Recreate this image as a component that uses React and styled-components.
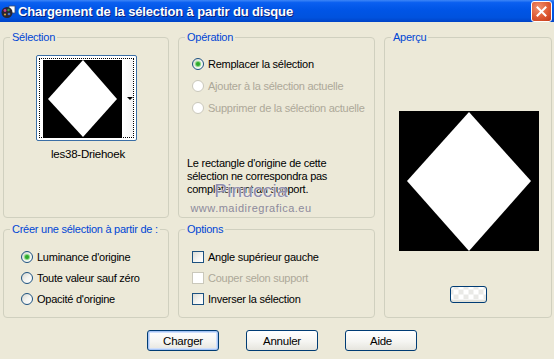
import React from 'react';
import styled, { createGlobalStyle } from 'styled-components';

const GlobalStyle = createGlobalStyle`
  html, body {
    margin: 0;
    padding: 0;
    background: #ece9d8;
  }
  body {
    font-family: "Liberation Sans", Arial, sans-serif;
    font-size: 11px;
    letter-spacing: -0.25px;
    color: #000;
  }
`;

const Window = styled.div`
  position: relative;
  width: 554px;
  height: 359px;
  background: #ece9d8;
  overflow: hidden;
`;

const TitleBar = styled.div`
  height: 22px;
  display: flex;
  align-items: center;
  padding: 0 2px 0 1px;
  background: linear-gradient(
    180deg,
    #3d86f7 0%,
    #0a5ff0 12%,
    #0055e6 45%,
    #0052de 80%,
    #0043c6 100%
  );
`;

const TitleText = styled.div`
  flex: 1;
  margin-left: 2px;
  color: #fff;
  font-weight: bold;
  font-size: 13px;
  letter-spacing: -0.15px;
  text-shadow: 1px 1px 0 #0a1e7a;
`;

const CloseButton = styled.div`
  width: 19px;
  height: 19px;
  border: 1px solid #fff;
  border-radius: 3px;
  display: flex;
  align-items: center;
  justify-content: center;
  background: radial-gradient(circle at 35% 30%, #f0916f 0%, #de5a33 55%, #c2391a 100%);
`;

const Body = styled.div`
  display: grid;
  grid-template-columns: 166px 197px 168px;
  grid-template-rows: 187px 95px;
  column-gap: 9px;
  row-gap: 5px;
  padding: 9px 0 0 3px;
`;

const Group = styled.fieldset`
  margin: 0;
  padding: 0;
  min-width: 0;
  border: 1px solid #d0d0bf;
  border-radius: 4px;
  grid-column: ${p => p.$col || 'auto'};
  grid-row: ${p => p.$rows || 'auto'};
  display: flex;
  flex-direction: column;
`;

const Legend = styled.legend`
  margin-left: 6px;
  padding: 0 2px;
  line-height: 13px;
  color: #0046d5;
  white-space: nowrap;
`;

const Rows = styled.div`
  display: flex;
  flex-direction: column;
  padding: ${p => p.$top}px 0 0 ${p => p.$left}px;
`;

const Row = styled.label`
  height: ${p => p.$h || 22}px;
  display: flex;
  align-items: center;
  gap: 4px;
  white-space: nowrap;
  color: ${p => (p.$disabled ? '#aca899' : '#000')};
`;

const Radio = styled.span`
  flex: none;
  box-sizing: border-box;
  width: 12px;
  height: 12px;
  border-radius: 50%;
  border: 1px solid ${p => (p.$disabled ? '#cac8bb' : '#1c5180')};
  background: ${p =>
    p.$disabled ? '#fff' : 'linear-gradient(135deg, #d6d6ce 0%, #f4f4f0 50%, #fff 100%)'};
  display: flex;
  align-items: center;
  justify-content: center;

  &::after {
    content: '';
    display: ${p => (p.$checked ? 'block' : 'none')};
    width: 4px;
    height: 4px;
    border-radius: 50%;
    background: #2fa82c;
    box-shadow: 0 0 1px 1px #7bd478;
  }
`;

const Check = styled.span`
  flex: none;
  box-sizing: border-box;
  width: 12px;
  height: 12px;
  border: 1px solid ${p => (p.$disabled ? '#cac8bb' : '#1c5180')};
  background: ${p =>
    p.$disabled ? '#fff' : 'linear-gradient(135deg, #dcdcd5 0%, #f6f6f3 60%, #fff 100%)'};
`;

const SelectionBody = styled.div`
  display: flex;
  flex-direction: column;
  align-items: center;
  padding: 11px 0 0 1px;
`;

const Thumb = styled.div`
  box-sizing: border-box;
  width: 101px;
  height: 86px;
  padding: 2px;
  border: 1px solid #3a6ea5;
  border-radius: 2px;
  background: #fff;
`;

const ThumbFocus = styled.div`
  box-sizing: border-box;
  height: 100%;
  display: flex;
  padding: 1px 0 0 3px;
  border: 1px dotted #000;
  background: #fff;
`;

const DropStrip = styled.div`
  flex: 1;
  display: flex;
  align-items: center;
  justify-content: flex-end;
  background: linear-gradient(90deg, #fff 0%, #f3f3f3 100%);
`;

const Arrow = styled.span`
  width: 0;
  height: 0;
  border-left: 3px solid transparent;
  border-right: 3px solid transparent;
  border-top: 3px solid #000;
`;

const ThumbLabel = styled.div`
  margin-top: 7px;
  font-size: 11.5px;
  padding-left: 3px;
`;

const Note = styled.p`
  margin: 38px 0 0 8px;
  line-height: 13px;
  white-space: nowrap;
`;

const PreviewBody = styled.div`
  display: flex;
  flex-direction: column;
  align-items: center;
  padding: 67px 0 0 1px;
`;

const PreviewButton = styled.div`
  margin-top: 35px;
  width: 37px;
  height: 17px;
  box-sizing: border-box;
  border: 1px solid #003c74;
  border-radius: 3px;
  background:
    repeating-conic-gradient(#e9e9e6 0 25%, #fff 0 50%) 50% 50% / 10px 10px;
  box-shadow: inset 0 -2px 0 #e3e3db;
`;

const ButtonBar = styled.div`
  display: flex;
  gap: 27px;
  padding: 12px 0 0 147px;
`;

const Button = styled.div`
  box-sizing: border-box;
  width: 72px;
  height: 21px;
  display: flex;
  align-items: center;
  justify-content: center;
  border: 1px solid #003c74;
  border-radius: 3px;
  font-size: 11.5px;
  background: linear-gradient(180deg, #fff 0%, #f5f5f2 55%, #e6e5de 100%);
  box-shadow: ${p => (p.$default ? 'inset 0 0 0 1px #a6c4f5, inset 0 0 0 2px #cfdffb' : 'none')};
`;

const Watermark = styled.div`
  position: absolute;
  left: 190px;
  top: 181px;
  display: flex;
  flex-direction: column;
  align-items: center;
  width: 122px;
  pointer-events: none;
`;

const WatermarkName = styled.div`
  font-size: 19px;
  line-height: 20px;
  color: #8e8caa;
  letter-spacing: 0.2px;
  text-shadow: 0 0 1px #fff, 0 0 2px #f4f2ee;
`;

const WatermarkUrl = styled.div`
  margin-top: 1px;
  font-size: 11px;
  color: #8c8a9c;
  letter-spacing: 0.5px;
`;

const Diamond = ({ w, h, pts }) => (
  <svg width={w} height={h} viewBox={`0 0 ${w} ${h}`} style={{ display: 'block' }}>
    <rect width={w} height={h} fill="#000" />
    <polygon points={pts} fill="#fff" />
  </svg>
);

const AppIcon = () => (
  <svg width="15" height="15" viewBox="0 0 15 15">
    <rect x="8" y="2" width="6" height="7" fill="#fff" stroke="#3b4b6b" strokeWidth="0.8" />
    <circle cx="6" cy="8.5" r="5.5" fill="#2a2630" />
    <circle cx="4" cy="6.5" r="1.4" fill="#c43c8c" />
    <circle cx="7.5" cy="6" r="1.2" fill="#3aa04a" />
    <circle cx="8" cy="10" r="1.3" fill="#3f6fd0" />
    <circle cx="4" cy="10.5" r="1.1" fill="#d9a43b" />
  </svg>
);

export default function App() {
  return (
    <Window>
      <GlobalStyle />
      <TitleBar>
        <AppIcon />
        <TitleText>Chargement de la sélection à partir du disque</TitleText>
        <CloseButton>
          <svg width="11" height="11" viewBox="0 0 11 11">
            <path d="M1.5 1.5 L9.5 9.5 M9.5 1.5 L1.5 9.5" stroke="#fff" strokeWidth="2" strokeLinecap="square" />
          </svg>
        </CloseButton>
      </TitleBar>

      <Body>
        <Group $col="1" $rows="1">
          <Legend>Sélection</Legend>
          <SelectionBody>
            <Thumb>
              <ThumbFocus>
                <Diamond w={79} h={78} pts="40,0 74,39 40,77 5,39" />
                <DropStrip>
                  <Arrow />
                </DropStrip>
              </ThumbFocus>
            </Thumb>
            <ThumbLabel>les38-Driehoek</ThumbLabel>
          </SelectionBody>
        </Group>

        <Group $col="2" $rows="1">
          <Legend>Opération</Legend>
          <Rows $top={9} $left={13}>
            <Row>
              <Radio $checked />
              Remplacer la sélection
            </Row>
            <Row $disabled>
              <Radio $disabled />
              Ajouter à la sélection actuelle
            </Row>
            <Row $disabled>
              <Radio $disabled />
              Supprimer de la sélection actuelle
            </Row>
          </Rows>
          <Note>
            Le rectangle d'origine de cette
            <br />
            sélection ne correspondra pas
            <br />
            complètement au support.
          </Note>
        </Group>

        <Group $col="3" $rows="1 / span 2">
          <Legend>Aperçu</Legend>
          <PreviewBody>
            <Diamond w={140} h={140} pts="70,1 132,70 70,140 8,70" />
            <PreviewButton />
          </PreviewBody>
        </Group>

        <Group $col="1" $rows="2">
          <Legend>Créer une sélection à partir de :</Legend>
          <Rows $top={10} $left={17}>
            <Row $h={21}>
              <Radio $checked />
              Luminance d'origine
            </Row>
            <Row $h={21}>
              <Radio />
              Toute valeur sauf zéro
            </Row>
            <Row $h={21}>
              <Radio />
              Opacité d'origine
            </Row>
          </Rows>
        </Group>

        <Group $col="2" $rows="2">
          <Legend>Options</Legend>
          <Rows $top={10} $left={13}>
            <Row $h={21}>
              <Check />
              Angle supérieur gauche
            </Row>
            <Row $h={21} $disabled>
              <Check $disabled />
              Couper selon support
            </Row>
            <Row $h={21}>
              <Check />
              Inverser la sélection
            </Row>
          </Rows>
        </Group>
      </Body>

      <ButtonBar>
        <Button $default>Charger</Button>
        <Button>Annuler</Button>
        <Button>Aide</Button>
      </ButtonBar>

      <Watermark>
        <WatermarkName>Pinuccia</WatermarkName>
        <WatermarkUrl>www.maidiregrafica.eu</WatermarkUrl>
      </Watermark>
    </Window>
  );
}
